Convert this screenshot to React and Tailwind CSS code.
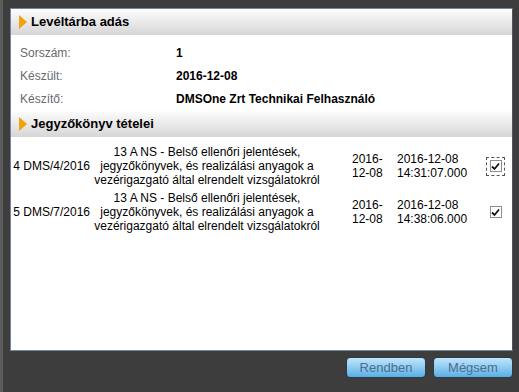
export default function App() {
  const rows = [
    { no: "4 DMS/4/2016", date: "2016-12-08", time: "14:31:07.000", focused: true },
    { no: "5 DMS/7/2016", date: "2016-12-08", time: "14:38:06.000", focused: false },
  ];

  const Section = ({ title }) => (
    <div className="flex h-[26px] items-center bg-gradient-to-b from-[#fdfdfd] to-[#d6d6d6] pl-[8px]">
      <span className="mr-[4px] h-0 w-0 border-y-[7px] border-l-[8px] border-y-transparent border-l-[#f0a30a]"></span>
      <span className="text-[13px] font-bold text-black">{title}</span>
    </div>
  );

  return (
    <div
      className="flex h-[392px] w-[519px] flex-col border-l-[3px] border-[#5c5c5c] bg-[#3d3d3d] pl-[7px] pt-[8px]"
      style={{ fontFamily: '"Liberation Sans", Arial, sans-serif' }}
    >
      <div className="flex h-[343px] w-[503px] flex-col border border-[#7385a5] border-r-[#4e5666] bg-white">
        <Section title="Levéltárba adás" />
        <div className="flex flex-col pl-[9px] pt-[6px] text-[12px]">
          {[
            ["Sorszám:", "1"],
            ["Készült:", "2016-12-08"],
            ["Készítő:", "DMSOne Zrt Technikai Felhasználó"],
          ].map(([k, v]) => (
            <div key={k} className="flex h-[23px] items-center">
              <span className="w-[156px] text-[#6a6a6a]">{k}</span>
              <span className="font-bold text-black">{v}</span>
            </div>
          ))}
        </div>
        <div className="mt-[1px]">
          <Section title="Jegyzőkönyv tételei" />
        </div>
        <div className="flex flex-col gap-[4px] pt-[8px] text-[12px] leading-[14px] text-black">
          {rows.map((r) => (
            <div key={r.no} className="flex items-center">
              <div className="w-[79px] text-right">{r.no}</div>
              <div className="ml-[1px] w-[232px] text-center">
                13 A NS - Belső ellenőri jelentések,
                <br />
                jegyzőkönyvek, és realizálási anyagok a
                <br />
                vezérigazgató által elrendelt vizsgálatokról
              </div>
              <div className="ml-[29px] w-[45px]">
                2016-
                <br />
                12-08
              </div>
              <div className="w-[89px]">
                {r.date}
                <br />
                {r.time}
              </div>
              <div
                className={`flex h-[19px] w-[19px] items-center justify-center border border-dashed ${
                  r.focused ? "border-[#555]" : "border-transparent"
                }`}
              >
                <span className="flex h-[12px] w-[12px] items-center justify-center border border-[#8e8f8f] bg-white">
                  <svg width="9" height="9" viewBox="0 0 9 9">
                    <path d="M1 4.5 L3.5 7 L8 1.5" fill="none" stroke="#111" strokeWidth="1.8" />
                  </svg>
                </span>
              </div>
            </div>
          ))}
        </div>
      </div>
      <div className="mt-[6px] flex w-[503px] justify-end gap-[7px]">
        {["Rendben", "Mégsem"].map((b) => (
          <button
            key={b}
            className="h-[21px] w-[80px] rounded-[4px] border border-[#2e3a44] bg-gradient-to-b from-[#bfe6fb] to-[#57b0e6] text-[13px] text-[#4f6d8c]"
          >
            {b}
          </button>
        ))}
      </div>
    </div>
  );
}
